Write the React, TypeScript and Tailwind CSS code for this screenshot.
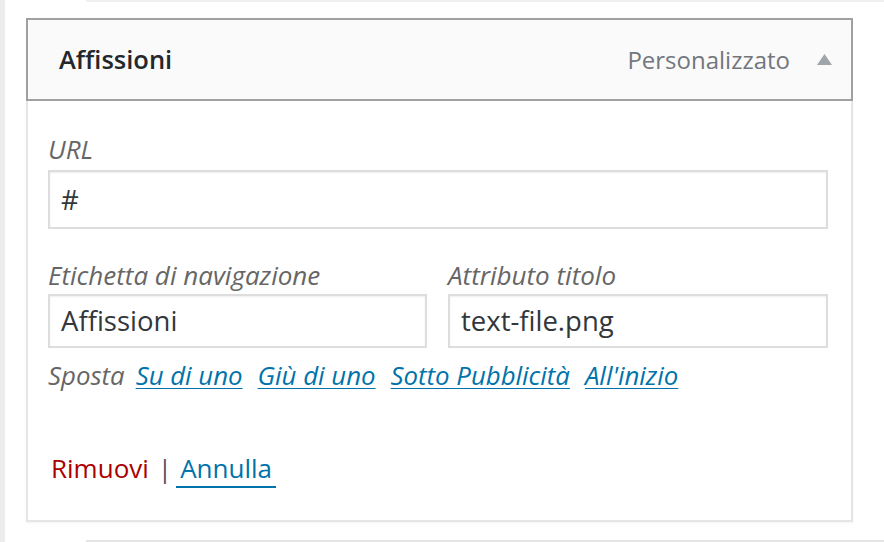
import React from 'react';

const font = { fontFamily: '"Open Sans", "Liberation Sans", sans-serif' };

function MoveLink({ children }: { children: React.ReactNode }) {
	return (
		<a href="#" className="text-[#0073aa] underline decoration-1 underline-offset-[3px]">
			{children}
		</a>
	);
}

export default function App() {
	return (
		<div className="w-[884px] h-[542px] bg-white overflow-hidden flex" style={font}>
			{/* left edge of the outer container */}
			<div className="w-[5px] shrink-0 bg-[#ececec]" />

			<div className="flex-1 flex flex-col">
				{/* bottom of the previous menu item */}
				<div className="ml-[81px] h-[2px] bg-[#f0f0f0]" />

				{/* open menu item */}
				<div className="ml-[21px] mt-[16px] w-[827px] flex flex-col">
					<div className="h-[83px] border-2 border-[#a0a0a0] bg-[#fafafa] flex items-center pl-[31px] pr-[19px]">
						<span className="text-[25.5px] font-semibold text-[#23282d]">Affissioni</span>
						<span className="ml-auto text-[24px] text-[#72777c]">Personalizzato</span>
						<svg width="15" height="11" viewBox="0 0 15 11" className="ml-[27px]">
							<path d="M7.5 0 L15 11 L0 11 Z" fill="#a0a5aa" />
						</svg>
					</div>

					<div className="h-[421px] border-2 border-t-0 border-[#e5e5e5] shadow-[0_1px_2px_rgba(0,0,0,0.05)] pl-[20px] pt-[33px] flex flex-col">
						<label className="block italic text-[26px] leading-[30px] text-[#666]">URL</label>
						<div className="mt-[6px] w-[780px] h-[59px] border-2 border-[#dddddd] shadow-[inset_0_1px_2px_rgba(0,0,0,0.07)] flex items-center pl-[11px] text-[27.5px] text-[#32373c]">
							#
						</div>

						<div className="mt-[31px] flex gap-[21px]">
							<div className="w-[379px]">
								<label className="block italic text-[26px] leading-[30px] text-[#666]">Etichetta di navigazione</label>
								<div className="mt-[4px] h-[54px] border-2 border-[#dddddd] shadow-[inset_0_1px_2px_rgba(0,0,0,0.07)] flex items-center pl-[11px] text-[27.5px] text-[#32373c]">
									Affissioni
								</div>
							</div>
							<div className="w-[380px]">
								<label className="block italic text-[26px] leading-[30px] text-[#666]">Attributo titolo</label>
								<div className="mt-[4px] h-[54px] border-2 border-[#dddddd] shadow-[inset_0_1px_2px_rgba(0,0,0,0.07)] flex items-center pl-[11px] text-[27.5px] text-[#32373c]">
									text-file.png
								</div>
							</div>
						</div>

						<div className="mt-[12px] flex items-baseline gap-[15px] italic text-[25.8px] leading-[30px] text-[#666]">
							<span className="-mr-[4px]">Sposta</span>
							<MoveLink>Su di uno</MoveLink>
							<MoveLink>Giù di uno</MoveLink>
							<MoveLink>Sotto Pubblicità</MoveLink>
							<MoveLink>All'inizio</MoveLink>
						</div>

						<div className="mt-[63px] pl-[3px] flex items-baseline text-[26px] leading-[30px]">
							<a href="#" className="text-[#a00]">Rimuovi</a>
							<span className="ml-[9px] mr-[8px] text-[#555]">|</span>
							<a href="#" className="text-[#0073aa] border-b-2 border-[#0073aa] px-[4px] -ml-[4px] pb-[3px]">Annulla</a>
						</div>
					</div>
				</div>

				<div className="mt-auto ml-[81px] h-[2px] bg-[#e5e5e5]" />
			</div>
		</div>
	);
}
